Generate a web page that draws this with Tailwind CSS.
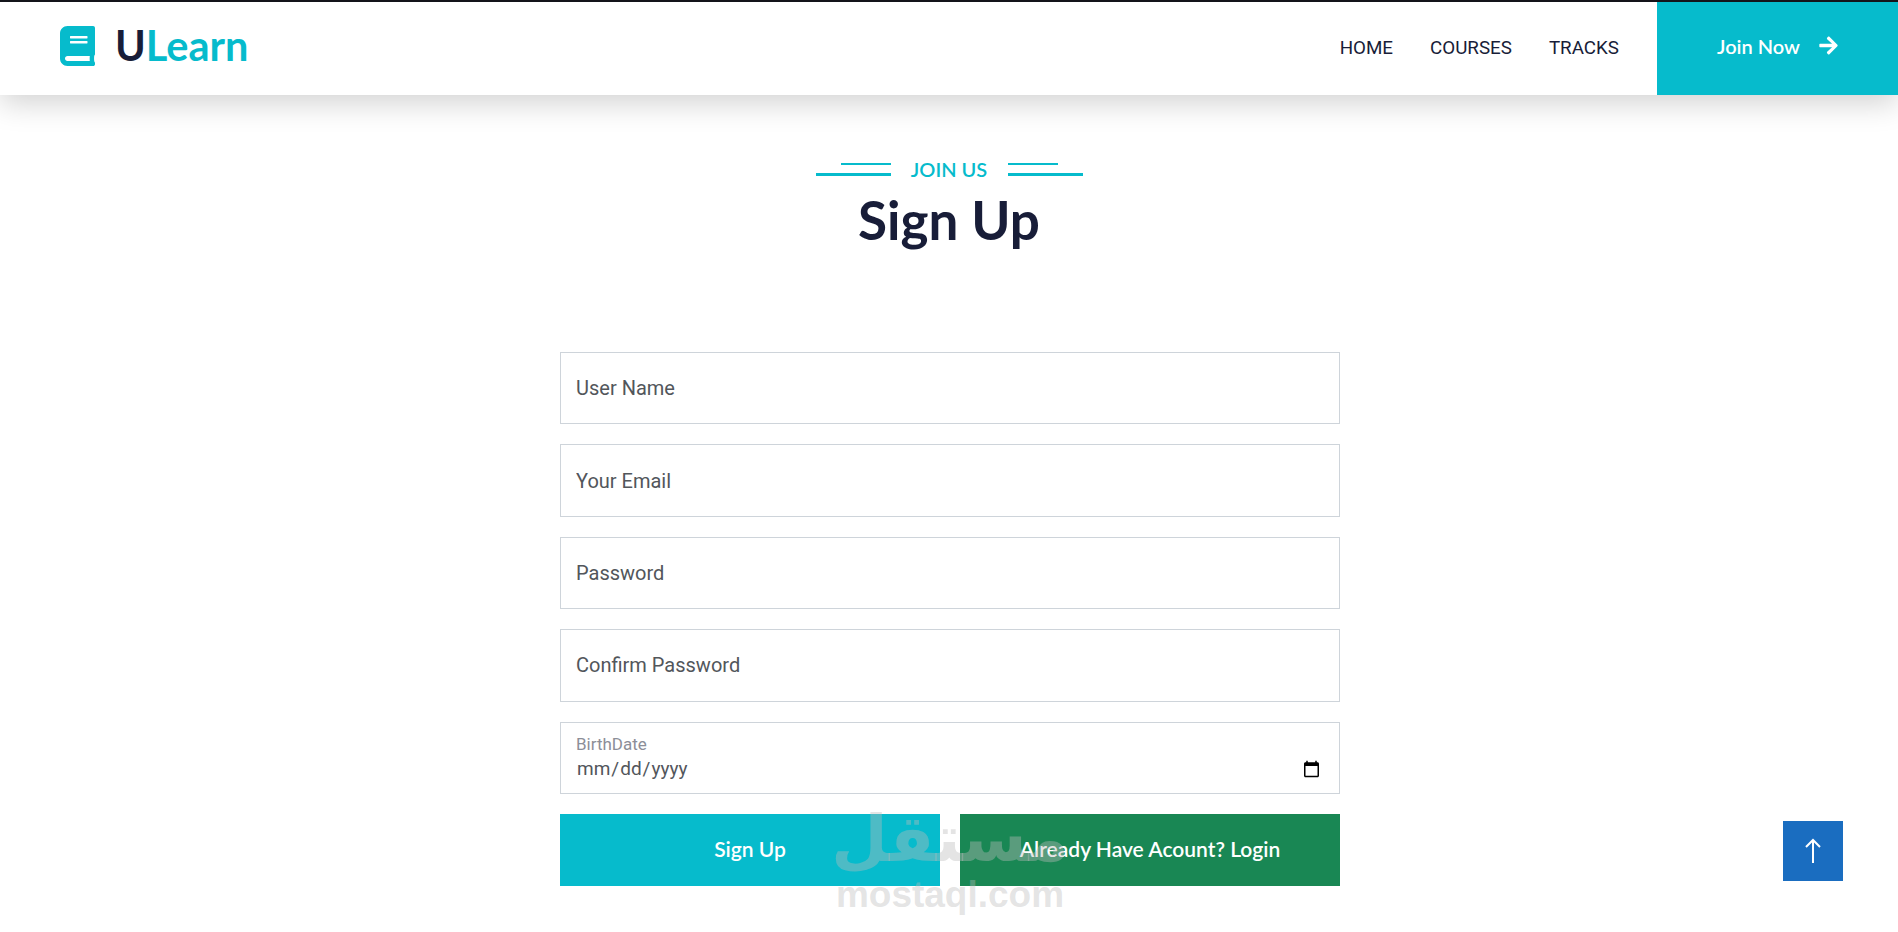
<!DOCTYPE html>
<html lang="en">
<head>
    <meta charset="UTF-8">
    <meta name="viewport" content="width=device-width, initial-scale=1.0">
    <title>Sign Up</title>
    <script src="https://cdn.jsdelivr.net/npm/@tailwindcss/browser@4"></script>
</head>
<body class="bg-white overflow-hidden font-['Roboto',sans-serif]">
    <div class="relative h-[932px] border-t-2 border-[#15161c]">

        <!-- navbar -->
        <header class="relative h-[93px] flex items-center bg-white shadow-[0_8px_28px_rgba(0,0,0,0.18)]">
            <a href="#" class="flex items-center pl-[60px] mb-[5px] gap-[20px] text-[#06bbcc]">
                <svg class="w-[35px] h-[40px] fill-current" viewBox="0 0 448 512"><path d="M448 360V24c0-13.3-10.7-24-24-24H96C43 0 0 43 0 96v320c0 53 43 96 96 96h328c13.3 0 24-10.7 24-24v-16c0-7.500-3.500-14.300-8.900-18.700-4.200-15.400-4.200-59.300 0-74.700 5.400-4.300 8.900-11.100 8.900-18.600zM128 134c0-3.300 2.700-6 6-6h212c3.300 0 6 2.700 6 6v20c0 3.300-2.700 6-6 6H134c-3.300 0-6-2.700-6-6v-20zm0 64c0-3.300 2.700-6 6-6h212c3.300 0 6 2.700 6 6v20c0 3.300-2.700 6-6 6H134c-3.300 0-6-2.700-6-6v-20zm253.400 250H96c-17.700 0-32-14.300-32-32 0-17.600 14.400-32 32-32h285.400c-1.900 17.100-1.900 46.900 0 64z"/></svg>
                <span class="font-['Lato',sans-serif] font-bold text-[41.5px] leading-none"><span class="text-[#181d38]">U</span>Learn</span>
            </a>
            <nav class="ml-auto flex items-center gap-[37px] pr-[38px] text-[18.800px] text-[#181d38]">
                <a href="#">HOME</a>
                <a href="#">COURSES</a>
                <a href="#">TRACKS</a>
            </nav>
            <a href="#" class="w-[241px] h-full pb-[6px] flex items-center justify-center gap-[19px] bg-[#06bbcc] text-white font-['Lato',sans-serif] font-semibold text-[20px]">
                Join Now
                <svg class="w-[19px] h-[21px] fill-current" viewBox="0 0 448 512"><path d="M190.500 66.900l22.200-22.200c9.400-9.400 24.600-9.400 33.900 0L441 239c9.400 9.400 9.400 24.600 0 33.900L246.600 467.300c-9.400 9.400-24.600 9.400-33.900 0l-22.200-22.200c-9.500-9.500-9.300-25 .4-34.300L311.400 296H24c-13.300 0-24-10.700-24-24v-32c0-13.300 10.700-24 24-24h287.400L190.900 101.200c-9.800-9.300-10-24.800-.4-34.300z"/></svg>
            </a>
        </header>

        <main class="flex flex-col items-center">
            <!-- section title -->
            <div class="mt-[59px] flex items-start gap-5">
                <div class="w-[75px] flex flex-col items-end gap-2 pt-[9px]">
                    <div class="w-[50px] h-[2px] bg-[#06bbcc]"></div>
                    <div class="w-[75px] h-[3px] bg-[#06bbcc]"></div>
                </div>
                <span class="w-[77px] pt-[4px] text-center font-['Lato',sans-serif] font-semibold text-[20px] leading-[22px] whitespace-nowrap text-[#06bbcc]">JOIN US</span>
                <div class="w-[75px] flex flex-col items-start gap-2 pt-[9px]">
                    <div class="w-[50px] h-[2px] bg-[#06bbcc]"></div>
                    <div class="w-[75px] h-[3px] bg-[#06bbcc]"></div>
                </div>
            </div>
            <h1 class="mt-[10px] font-['Lato',sans-serif] font-bold text-[53px] leading-[60px] text-[#181d38]">Sign Up</h1>

            <!-- form -->
            <form class="mt-[102px] ml-[2px] w-[780px] flex flex-col gap-5">
                <input type="text" placeholder="User Name" class="h-[72.4px] px-[15px] border border-[#ced4da] text-[20px] outline-none placeholder:text-[#52565b]">
                <input type="email" placeholder="Your Email" class="h-[72.4px] px-[15px] border border-[#ced4da] text-[20px] outline-none placeholder:text-[#52565b]">
                <input type="password" placeholder="Password" class="h-[72.4px] px-[15px] border border-[#ced4da] text-[20px] outline-none placeholder:text-[#52565b]">
                <input type="password" placeholder="Confirm Password" class="h-[72.4px] px-[15px] border border-[#ced4da] text-[20px] outline-none placeholder:text-[#52565b]">
                <div class="h-[72.4px] pl-[15px] pr-[16px] pt-[10px] border border-[#ced4da] flex flex-col">
                    <label class="text-[17px] leading-[23px] text-[#8c8e98]">BirthDate</label>
                    <input type="date" class="w-full h-[27px] text-[19px] text-[#52565b] outline-none">
                </div>
                <div class="flex gap-5">
                    <button type="button" class="flex-1 h-[72px] pb-[2px] bg-[#06bbcc] text-white font-['Lato',sans-serif] font-semibold text-[21px]">Sign Up</button>
                    <button type="button" class="flex-1 h-[72px] pb-[2px] bg-[#198754] text-white font-['Lato',sans-serif] font-semibold text-[21px]">Already Have Acount? Login</button>
                </div>
            </form>
        </main>

        <!-- back to top -->
        <a href="#" class="absolute left-[1783px] top-[819px] w-[60px] h-[60px] flex items-center justify-center bg-[#1a6dc0]">
            <svg class="w-[20px] h-[28px] stroke-white fill-none" stroke-width="2" viewBox="0 0 20 28"><path d="M10 26V3M3 10l7-7 7 7"/></svg>
        </a>

        <!-- watermark -->
        <div class="absolute left-[835px] top-[798px] w-[230px] flex flex-col items-center pointer-events-none text-[#bbbbbb]/40 font-['Liberation_Sans',sans-serif] font-bold">
            <span class="font-['DejaVu_Sans',sans-serif] text-[65px] leading-[78px] whitespace-nowrap" dir="rtl">مستقل</span>
            <span class="text-[37px] leading-[34px]">mostaql.com</span>
        </div>
    </div>
</body>
</html>
